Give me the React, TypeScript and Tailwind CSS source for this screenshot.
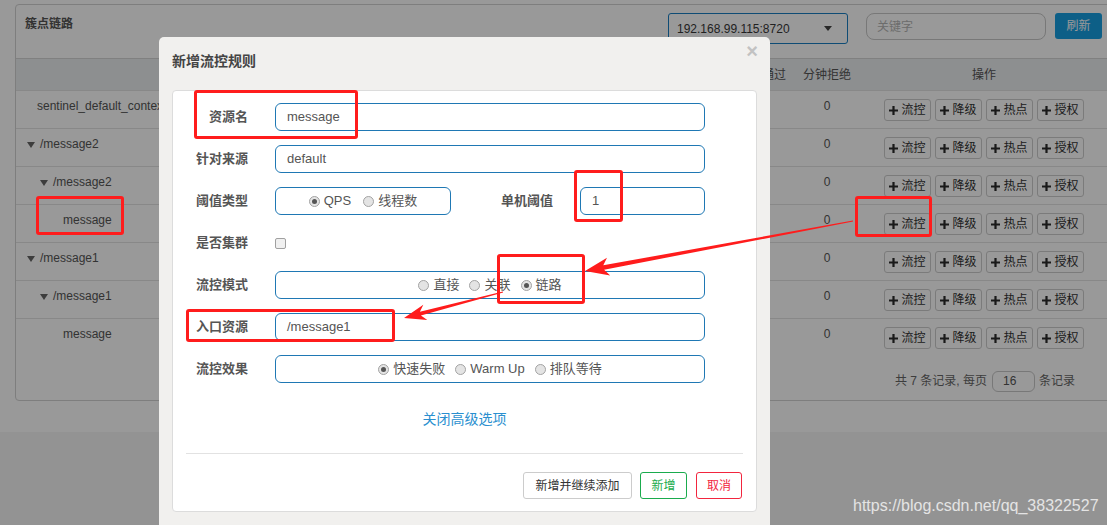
import React from 'react';

type Node = { name: string; level: number; leaf: boolean };

const ROWS: Node[] = [
  { name: 'sentinel_default_context', level: 0, leaf: true },
  { name: '/message2', level: 0, leaf: false },
  { name: '/message2', level: 1, leaf: false },
  { name: 'message', level: 2, leaf: true },
  { name: '/message1', level: 0, leaf: false },
  { name: '/message1', level: 1, leaf: false },
  { name: 'message', level: 2, leaf: true },
];

const ACTIONS = ['流控', '降级', '热点', '授权'];

const PlusIcon = () => (
  <svg width="9" height="9" viewBox="0 0 9 9" className="shrink-0">
    <path d="M3.4 0h2.2v3.4H9v2.2H5.6V9H3.4V5.6H0V3.4h3.4z" fill="#2a2a2a" />
  </svg>
);

const Radio = ({ checked, label }: { checked?: boolean; label: string }) => (
  <label className="flex items-center gap-[4px]">
    <span className="flex items-center justify-center w-[11px] h-[11px] rounded-full border border-[#a3a3a3] bg-[#e4e4e4]">
      {checked && <span className="w-[5px] h-[5px] rounded-full bg-[#555]" />}
    </span>
    <span>{label}</span>
  </label>
);

const Field = ({ children }: { children: React.ReactNode }) => (
  <div className="ml-[27px] flex items-center h-[28px] w-[430px] border border-[#1f78b4] rounded-[6px] px-[11px] text-[13px] text-[#555]">
    {children}
  </div>
);

const Label = ({ children }: { children: React.ReactNode }) => (
  <div className="w-[75px] shrink-0 text-right text-[13px] font-bold text-[#555]">{children}</div>
);

// red markup drawn on top of the screenshot
const Mark = ({ className }: { className: string }) => (
  <div className={`absolute border-[3px] border-[#ff1c1c] rounded-[3px] ${className}`} />
);

export default function App() {
  return (
    <div className="relative w-[1107px] h-[525px] overflow-hidden bg-[#f5f5f5] font-['Liberation_Sans','Noto_Sans_CJK_SC',sans-serif]">
      {/* page */}
      <div className="h-[432px] bg-white pl-[15px] pt-[4px]">
        <div className="w-[1097px] h-[397px] border border-[#d2d2d2] rounded-[4px] bg-white flex flex-col">
          <div className="h-[54px] shrink-0 border-b border-[#d6d6d6] flex items-start pt-[8px] pl-[9px] pr-[9px]">
            <div className="mt-[2px] text-[12px] leading-[18px] font-bold text-[#555]">簇点链路</div>
            <div className="ml-auto flex items-start">
              <div className="w-[180px] h-[31px] border border-[#1a7fc4] rounded-[3px] flex items-center pl-[8px] pr-[15px] text-[12px] text-[#383838]">
                <span>192.168.99.115:8720</span>
                <span className="ml-auto w-0 h-0 border-l-[4px] border-r-[4px] border-t-[5px] border-l-transparent border-r-transparent border-t-[#444]" />
              </div>
              <div className="ml-[18px] w-[180px] h-[27px] border border-[#c8c8c8] rounded-[8px] flex items-center pl-[10px] text-[12px] text-[#b5b5b5]">
                关键字
              </div>
              <button className="ml-[9px] w-[47px] h-[26px] rounded-[3px] bg-[#179fe2] text-white text-[12px]">刷新</button>
            </div>
          </div>

          {/* table head */}
          <div className="h-[31px] shrink-0 flex items-center bg-[#eceef1] text-[12px] text-[#555]">
            <div className="flex-1" />
            <div className="w-[46px] text-center">通过</div>
            <div className="w-[60px] text-center">分钟拒绝</div>
            <div className="w-[254px] text-center">操作</div>
          </div>

          {ROWS.map((r, i) => (
            <div key={i} className="h-[38px] shrink-0 flex border-t border-[#e3e3e3] text-[12px] leading-[14px] text-[#555]">
              <div className="flex-1 pt-[8px] pl-[11px] flex items-start">
                <div className="flex items-center" style={{ paddingLeft: r.level * 13 }}>
                  {r.leaf ? (
                    <span className="w-[10px]" />
                  ) : (
                    <span className="w-[13px] flex">
                      <span className="mt-[2px] w-0 h-0 border-l-[4px] border-r-[4px] border-t-[6px] border-l-transparent border-r-transparent border-t-[#666]" />
                    </span>
                  )}
                  <span>{r.name}</span>
                </div>
              </div>
              <div className="w-[46px]" />
              <div className="w-[60px] pt-[8px] text-center">0</div>
              <div className="w-[254px] pt-[8px] flex justify-center gap-[4px]">
                {ACTIONS.map((a) => (
                  <button key={a} className="w-[47px] h-[22px] flex items-center justify-center gap-[3px] border border-[#cdcdcd] rounded-[3px] bg-white text-[12px] text-[#333]">
                    <PlusIcon />
                    {a}
                  </button>
                ))}
              </div>
            </div>
          ))}

          <div className="h-[44px] pt-[6px] flex items-center justify-end pr-[36px] text-[12px] text-[#666]">
            <span>共 7 条记录, 每页</span>
            <div className="ml-[5px] w-[43px] h-[21px] border border-[#c8c8c8] rounded-[6px] flex items-center pl-[10px] text-[#555]">16</div>
            <span className="ml-[4px]">条记录</span>
          </div>
        </div>
      </div>

      {/* backdrop */}
      <div className="absolute inset-0 bg-black/40" />

      {/* modal */}
      <div className="absolute left-[159px] top-[37px] w-[611px] h-[500px] bg-[#f1f0ee] rounded-[5px]">
        <div className="h-[53px] pt-[14px] pl-[13px] text-[14px] leading-[20px] font-bold text-[#444]">新增流控规则</div>
        <span className="absolute right-[12px] top-[4px] text-[20px] leading-[20px] font-bold text-[#c2c2c2]">×</span>

        <div className="mx-[13px] h-[422px] bg-white border border-[#dcdcdc] rounded-[4px] flex flex-col">
          <div className="pt-[12px] flex flex-col gap-[14px]">
            <div className="flex items-center h-[28px]">
              <Label>资源名</Label>
              <Field>message</Field>
            </div>
            <div className="flex items-center h-[28px]">
              <Label>针对来源</Label>
              <Field>default</Field>
            </div>
            <div className="flex items-center h-[28px]">
              <Label>阈值类型</Label>
              <div className="ml-[27px] h-[28px] w-[176px] border border-[#1f78b4] rounded-[6px] flex items-center justify-center gap-[12px] text-[13px] text-[#555]">
                <Radio checked label="QPS" />
                <Radio label="线程数" />
              </div>
              <div className="ml-[27px]">
                <Label>单机阈值</Label>
              </div>
              <div className="ml-[27px] h-[28px] w-[125px] border border-[#1f78b4] rounded-[6px] flex items-center px-[11px] text-[13px] text-[#555]">1</div>
            </div>
            <div className="flex items-center h-[28px]">
              <Label>是否集群</Label>
              <span className="ml-[27px] w-[11px] h-[11px] border border-[#a0a0a0] rounded-[2px] bg-[#f0f0f0]" />
            </div>
            <div className="flex items-center h-[28px]">
              <Label>流控模式</Label>
              <div className="ml-[27px] h-[28px] w-[430px] border border-[#1f78b4] rounded-[6px] flex items-center justify-center gap-[10px] text-[13px] text-[#555]">
                <Radio label="直接" />
                <Radio label="关联" />
                <Radio checked label="链路" />
              </div>
            </div>
            <div className="flex items-center h-[28px]">
              <Label>入口资源</Label>
              <Field>/message1</Field>
            </div>
            <div className="flex items-center h-[28px]">
              <Label>流控效果</Label>
              <div className="ml-[27px] h-[28px] w-[430px] border border-[#1f78b4] rounded-[6px] flex items-center justify-center gap-[10px] text-[13px] text-[#555]">
                <Radio checked label="快速失败" />
                <Radio label="Warm Up" />
                <Radio label="排队等待" />
              </div>
            </div>
          </div>

          <div className="mt-[26px] text-center text-[14px] leading-[20px] text-[#2a8fcf]">关闭高级选项</div>
          <div className="mt-[24px] mx-[13px] border-t border-[#e2e2e2]" />
          <div className="mt-[18px] mr-[14px] flex justify-end gap-[8px] text-[12px]">
            <button className="h-[27px] w-[109px] border border-[#cccccc] rounded-[3px] bg-white text-[#333]">新增并继续添加</button>
            <button className="h-[27px] w-[47px] border border-[#1aab4d] rounded-[3px] bg-white text-[#1aab4d]">新增</button>
            <button className="ml-[1px] h-[27px] w-[46px] border border-[#f2253e] rounded-[3px] bg-white text-[#f2253e]">取消</button>
          </div>
        </div>
      </div>

      {/* annotations */}
      <Mark className="left-[194px] top-[90px] w-[164px] h-[49px]" />
      <Mark className="left-[574px] top-[170px] w-[49px] h-[52px]" />
      <Mark className="left-[36px] top-[196px] w-[88px] h-[39px]" />
      <Mark className="left-[855px] top-[196px] w-[77px] h-[41px]" />
      <Mark className="left-[497px] top-[254px] w-[88px] h-[50px]" />
      <Mark className="left-[186px] top-[309px] w-[209px] h-[33px]" />
      <svg className="absolute left-0 top-0 pointer-events-none" width="1107" height="525" viewBox="0 0 1107 525">
        <polygon
          fill="#ff1c1c"
          points="852.9,220.5 603.3,265.3 607,257.8 585,271 610.2,275.4 604.1,269.7 853.1,221.5"
        />
        <polygon
          fill="#ff1c1c"
          points="502.9,291.5 419.9,311.8 423.3,304.7 404,318 427.3,320.1 420.9,315.6 503.1,292.5"
        />
      </svg>

      <div className="absolute left-[853px] top-[496px] text-[16px] leading-[20px] text-[#e4e4e4]">
        https://blog.csdn.net/qq_38322527
      </div>
    </div>
  );
}
